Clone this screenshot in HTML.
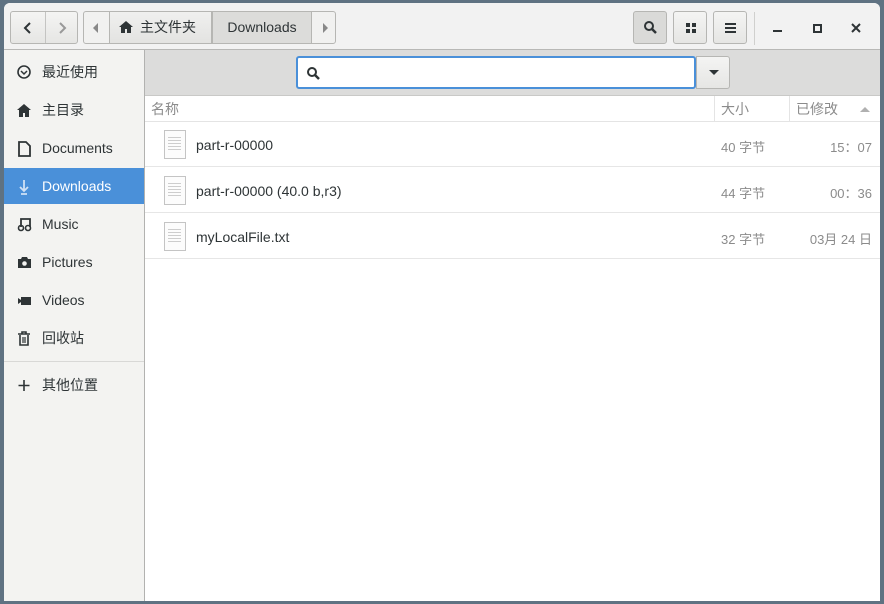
<!DOCTYPE html>
<html><head><meta charset="utf-8"><style>
*{box-sizing:border-box;margin:0;padding:0}
body{width:884px;height:604px;background:#5f7282;font-family:"Liberation Sans","Noto Sans CJK SC",sans-serif;position:relative;overflow:hidden}
.win{position:absolute;left:4px;top:3px;width:876px;height:598px;background:#fff;border-radius:6px 6px 0 0;overflow:hidden}
.hdr{position:absolute;left:0;top:0;width:876px;height:47px;background:#f2f2f2;border-bottom:1px solid #b8b8b6}
.btn{position:absolute;top:8px;height:33px;border:1px solid #b6b6b3;background:linear-gradient(#f4f4f3,#e6e6e4);border-radius:3px}
.side{position:absolute;left:0;top:47px;width:141px;height:551px;background:#f3f3f1;border-right:1px solid #b2b2b0}
.si{position:absolute;left:0;width:140px;height:36px;font-size:14px;color:#2e3436;line-height:36px;padding-left:38px}
.si svg{position:absolute;left:13px;top:11px}
.sel{background:#4a90d9;color:#fff}
.bar{position:absolute;left:141px;top:47px;width:735px;height:46px;background:#dcdcdb;border-bottom:1px solid #c9c9c7}
.col{position:absolute;top:93px;height:26px;font-size:14px;color:#8b8b8b;line-height:26px;border-bottom:1px solid #e4e4e4}
.row{position:absolute;left:141px;width:735px;height:46px;border-bottom:1px solid #e6e6e6;font-size:14px;color:#2e3436}
.row .n{position:absolute;left:51px;top:16px}
.row .s{position:absolute;left:576px;top:16px;color:#8b8b8b;font-size:13px}
.row .d{position:absolute;right:8px;top:16px;color:#8b8b8b;font-size:13px}
.fi{position:absolute;left:19px;top:9px;width:22px;height:29px;border:1px solid #c4c4c4;background:#fcfcfc}
.fi:after{content:"";position:absolute;left:3px;top:6px;width:13px;height:14px;background:repeating-linear-gradient(#cdcdcd 0 1px,transparent 1px 3px)}
</style></head><body>
<div class="win">
<div class="hdr">
 <div class="btn" style="left:6px;width:68px"><div style="position:absolute;left:34px;top:0;width:1px;height:31px;background:#c4c4c2"></div>
 <svg style="position:absolute;left:11px;top:9px" width="12" height="14"><path d="M8 2L3 7l5 5" stroke="#2e3436" stroke-width="2" fill="none"/></svg>
 <svg style="position:absolute;left:45px;top:9px" width="12" height="14"><path d="M4 2l5 5-5 5" stroke="#999" stroke-width="2" fill="none"/></svg></div>
 <div class="btn" style="left:79px;width:253px;background:#f1f1f0">
  <svg style="position:absolute;left:8px;top:10px" width="8" height="12"><path d="M6 1L1 6l5 5z" fill="#888"/></svg>
  <div style="position:absolute;left:25px;top:-1px;width:103px;height:33px;border:1px solid #b6b6b3;background:linear-gradient(#f0f0ef,#e3e3e1);font-size:14px;color:#2e3436;line-height:31px;padding-left:30px">主文件夹
   <svg style="position:absolute;left:8px;top:8px" width="16" height="14"><path d="M8 1L1 7h2v6h4V9h2v4h4V7h2z" fill="#2e3436"/></svg></div>
  <div style="position:absolute;left:128px;top:-1px;width:100px;height:33px;border:1px solid #b6b6b3;background:#dcdcda;font-size:14px;color:#2e3436;line-height:31px;text-align:center">Downloads</div>
  <svg style="position:absolute;left:237px;top:10px" width="8" height="12"><path d="M2 1l5 5-5 5z" fill="#888"/></svg>
 </div>
 <div class="btn" style="left:629px;width:34px;background:#dadad8"><svg style="position:absolute;left:9px;top:8px" width="16" height="16"><circle cx="6" cy="6" r="4" stroke="#2e3436" stroke-width="2" fill="none"/><path d="M9 9l4 4" stroke="#2e3436" stroke-width="2.5"/></svg></div>
 <div class="btn" style="left:669px;width:34px"><svg style="position:absolute;left:11px;top:10px" width="12" height="12"><rect x="1" y="1" width="4" height="4" fill="#2e3436"/><rect x="7" y="1" width="4" height="4" fill="#2e3436"/><rect x="1" y="7" width="4" height="4" fill="#2e3436"/><rect x="7" y="7" width="4" height="4" fill="#2e3436"/></svg></div>
 <div class="btn" style="left:709px;width:34px"><svg style="position:absolute;left:10px;top:10px" width="14" height="12"><path d="M1 2h11M1 6h11M1 10h11" stroke="#2e3436" stroke-width="2"/></svg></div>
 <div style="position:absolute;left:750px;top:9px;width:1px;height:33px;background:#d0d0ce"></div>
 <div style="position:absolute;left:769px;top:27px;width:9px;height:2px;background:#2e3436"></div>
 <div style="position:absolute;left:809px;top:21px;width:9px;height:9px;border:2px solid #2e3436"></div>
 <svg style="position:absolute;left:847px;top:20px" width="10" height="10"><path d="M1 1l8 8M9 1L1 9" stroke="#2e3436" stroke-width="2"/></svg>
</div>
<div class="side">
 <div class="si" style="top:4px"><svg width="16" height="16"><circle cx="7" cy="7" r="6" stroke="#2e3436" stroke-width="1.6" fill="none"/><path d="M4 6l3 3 3-3" stroke="#2e3436" stroke-width="1.5" fill="none"/></svg>最近使用</div>
 <div class="si" style="top:42px"><svg width="16" height="16"><path d="M7 1L0 7h2v7h4v-4h2v4h4V7h2z" fill="#2e3436"/></svg>主目录</div>
 <div class="si" style="top:80px"><svg width="16" height="16"><path d="M2 1h7l4 4v10H2z" stroke="#2e3436" stroke-width="1.8" fill="none"/></svg>Documents</div>
 <div class="si sel" style="top:118px"><svg width="16" height="16"><path d="M7 1v10M3 8l4 4 4-4M4 15h6" stroke="#cfe1f5" stroke-width="1.8" fill="none"/></svg>Downloads</div>
 <div class="si" style="top:156px"><svg width="16" height="16"><path d="M4 10V2h9v8" stroke="#2e3436" stroke-width="1.8" fill="none"/><circle cx="4" cy="11" r="2.5" stroke="#2e3436" stroke-width="1.6" fill="none"/><circle cx="11" cy="11" r="2.5" stroke="#2e3436" stroke-width="1.6" fill="none"/></svg>Music</div>
 <div class="si" style="top:194px"><svg width="16" height="16"><path d="M1 4h3l1-2h5l1 2h3v9H1z" fill="#2e3436"/><circle cx="7.5" cy="8.5" r="2.3" fill="#f3f3f1"/></svg>Pictures</div>
 <div class="si" style="top:232px"><svg width="16" height="16"><path d="M1 5l3 2v2l-3 2zM4 4h10v8H4z" fill="#2e3436"/></svg>Videos</div>
 <div class="si" style="top:270px"><svg width="16" height="16"><path d="M1 3h12M5 3V1h4v2M3 4v10h8V4" stroke="#2e3436" stroke-width="1.6" fill="none"/><path d="M6 6v6M8 6v6" stroke="#2e3436" stroke-width="1.2"/></svg>回收站</div>
 <div style="position:absolute;left:0;top:311px;width:140px;height:1px;background:#d8d8d6"></div>
 <div class="si" style="top:317px"><svg width="16" height="16"><path d="M7 2v11M1.5 7.5h11" stroke="#2e3436" stroke-width="1.6"/></svg>其他位置</div>
</div>
<div class="bar">
 <div style="position:absolute;left:151px;top:6px;width:400px;height:33px;background:#fff;border:2px solid #4a90d9;border-radius:3px"><svg style="position:absolute;left:8px;top:8px" width="16" height="16"><circle cx="6" cy="6" r="4" stroke="#2e3436" stroke-width="2" fill="none"/><path d="M9 9l4 4" stroke="#2e3436" stroke-width="2.5"/></svg></div>
 <div class="btn" style="left:551px;top:6px;width:34px;border-radius:0 3px 3px 0"><svg style="position:absolute;left:11px;top:12px" width="12" height="8"><path d="M1 1h10L6 6z" fill="#2e3436"/></svg></div>
</div>
<div class="col" style="left:141px;width:570px;padding-left:6px;border-right:1px solid #e4e4e4">名称</div>
<div class="col" style="left:711px;width:75px;padding-left:6px;border-right:1px solid #e4e4e4">大小</div>
<div class="col" style="left:786px;width:90px;padding-left:6px">已修改<svg style="position:absolute;right:10px;top:10px" width="10" height="6"><path d="M0 6L5 1l5 5z" fill="#b0b0b0"/></svg></div>
<div class="row" style="top:118px"><div class="fi"></div><span class="n">part-r-00000</span><span class="s">40 字节</span><span class="d">15：07</span></div>
<div class="row" style="top:164px"><div class="fi"></div><span class="n">part-r-00000 (40.0 b,r3)</span><span class="s">44 字节</span><span class="d">00：36</span></div>
<div class="row" style="top:210px"><div class="fi"></div><span class="n">myLocalFile.txt</span><span class="s">32 字节</span><span class="d">03月 24 日</span></div>
</div>
</body></html>
